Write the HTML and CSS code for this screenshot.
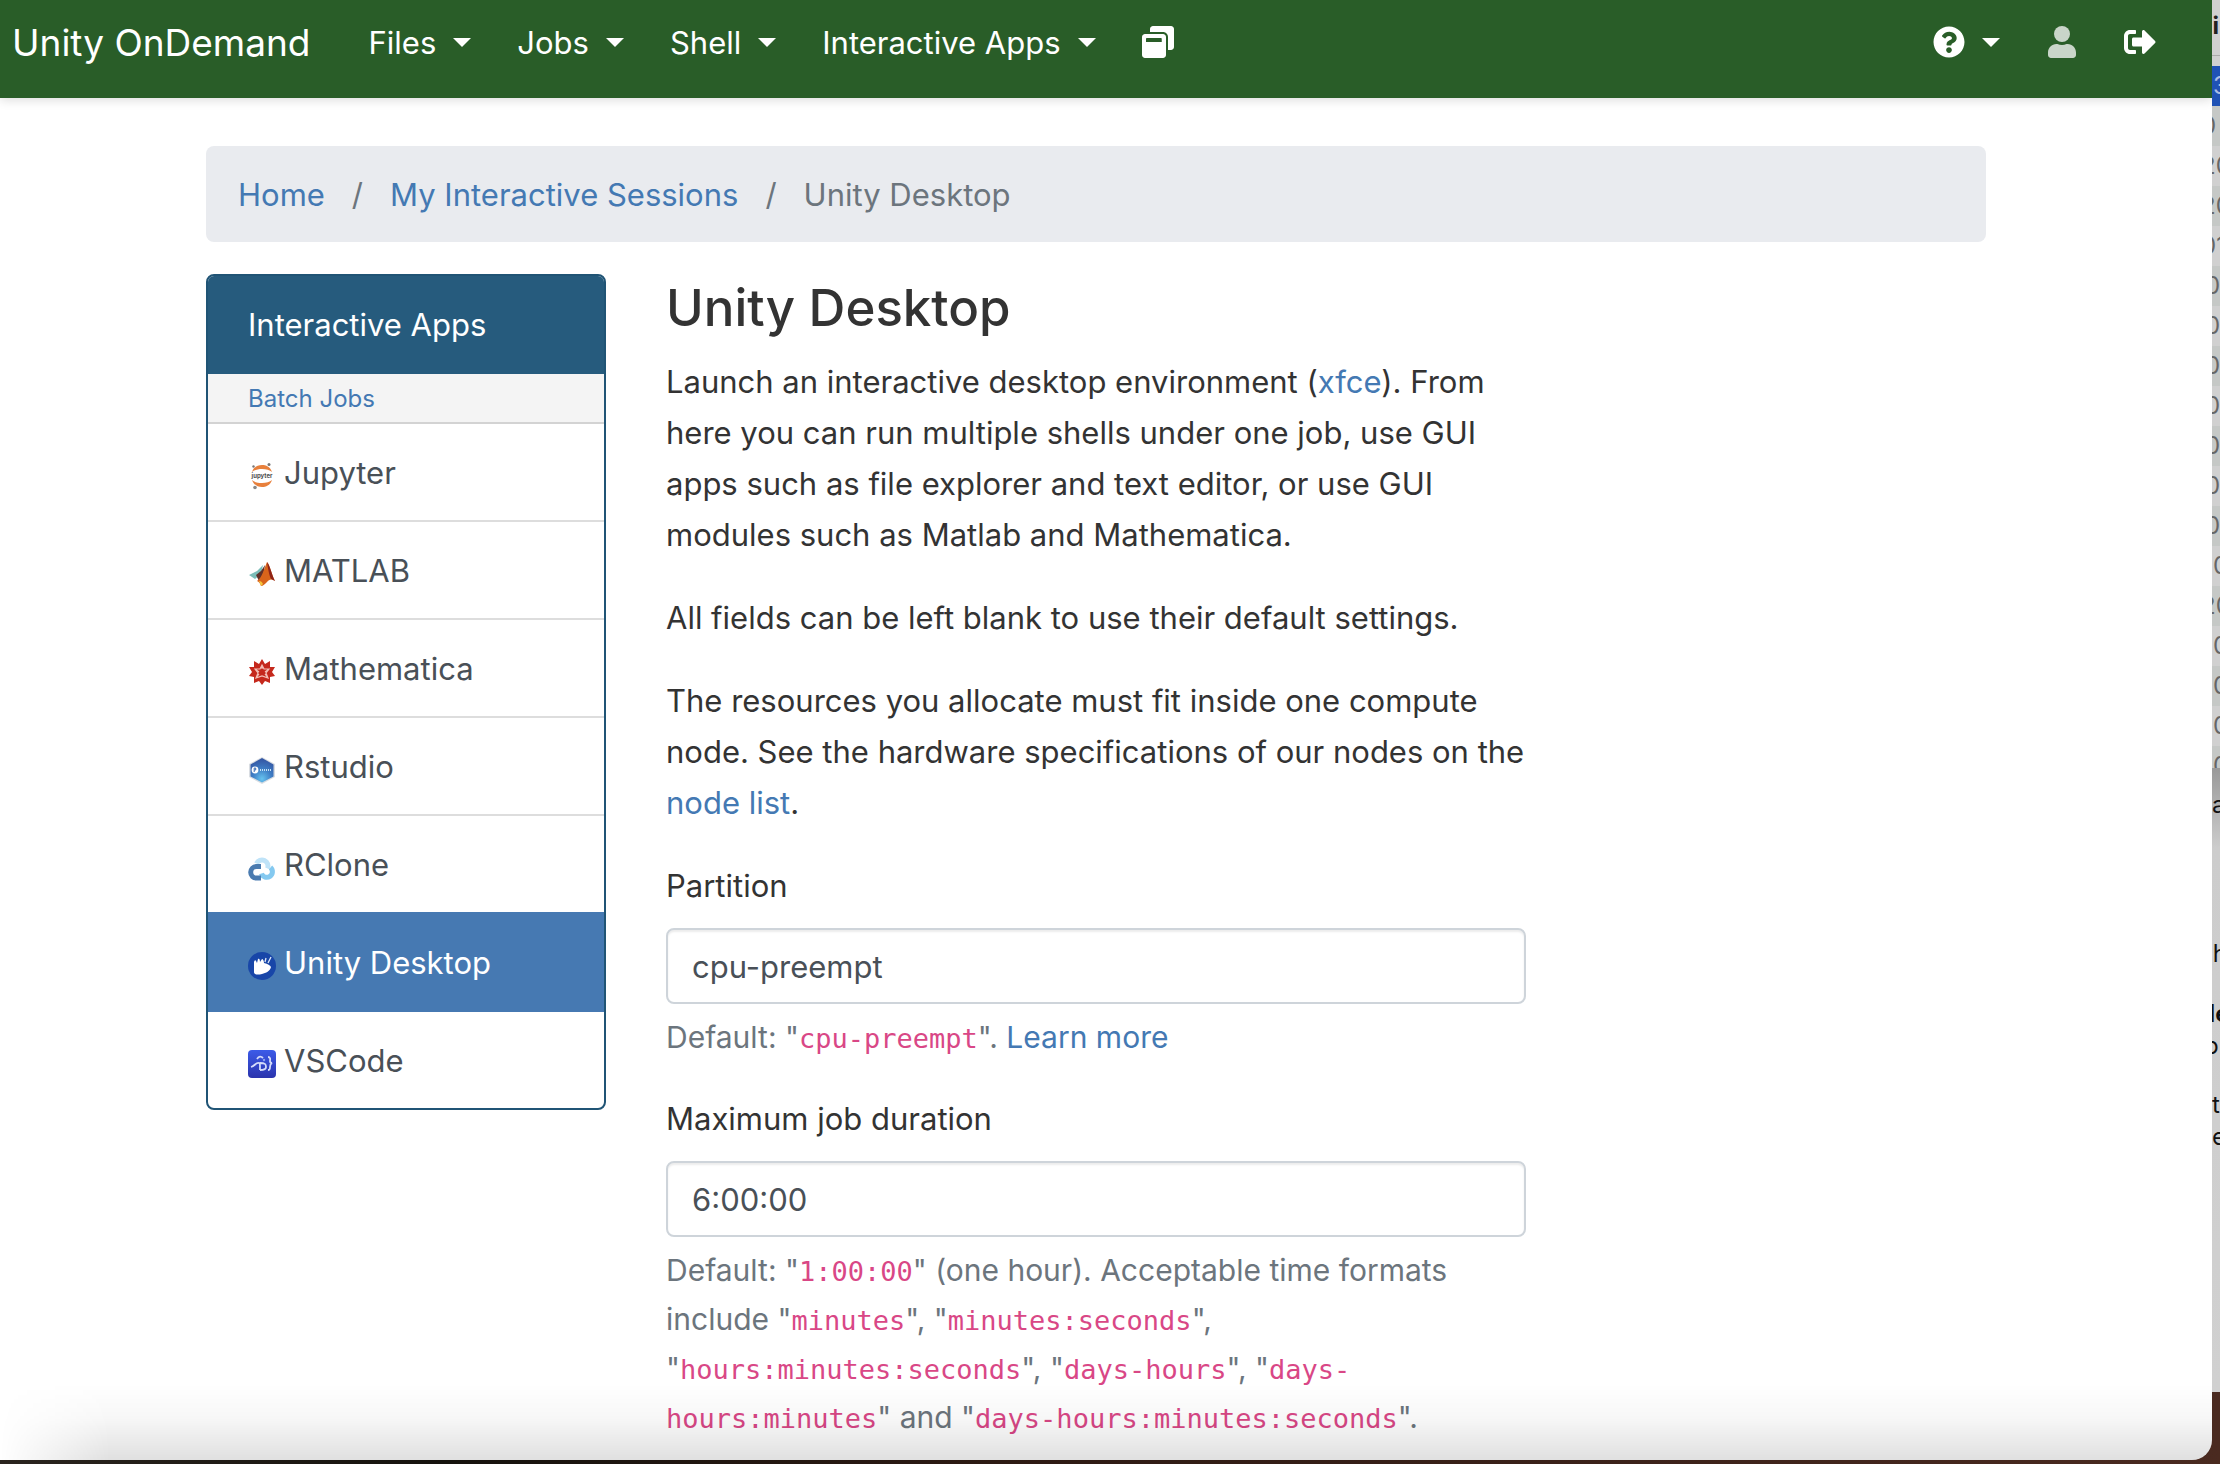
FILE: index.html
```
<!DOCTYPE html>
<html lang="en">
<head>
<meta charset="utf-8">
<meta name="viewport" content="width=device-width, initial-scale=1">
<title>Unity Desktop - Unity OnDemand</title>
<link rel="stylesheet" href="styles.css">
</head>
<body>
<div class="window">
  <header class="navbar">
    <a class="brand" href="#">Unity OnDemand</a>
    <nav class="nav nav-main" aria-label="Main">
      <button class="nav-item" type="button">Files <span class="caret"></span></button>
      <button class="nav-item" type="button">Jobs <span class="caret"></span></button>
      <button class="nav-item" type="button">Shell <span class="caret"></span></button>
      <button class="nav-item" type="button">Interactive Apps <span class="caret"></span></button>
      <a class="nav-item" href="#" aria-label="My Interactive Sessions">
        <svg class="nav-icon" viewBox="0 0 512 512" fill="currentColor"><path d="M512 48v288c0 26.500-21.500 48-48 48h-48V176c0-44.100-35.900-80-80-80H128V48c0-26.500 21.500-48 48-48h288c26.500 0 48 21.500 48 48zM384 176v288c0 26.500-21.500 48-48 48H48c-26.500 0-48-21.500-48-48V176c0-26.500 21.500-48 48-48h288c26.500 0 48 21.500 48 48zm-68 28c0-6.600-5.400-12-12-12H76c-6.600 0-12 5.400-12 12v52h252v-52z"/></svg>
      </a>
    </nav>
    <nav class="nav nav-user" aria-label="User">
      <button class="nav-item" type="button" aria-label="Help">
        <svg class="nav-icon" viewBox="0 0 512 512" fill="currentColor"><path d="M504 256c0 137-111 248-248 248S8 393 8 256C8 119 119 8 256 8s248 111 248 248zM262.700 90c-54.500 0-89.300 23-116.500 63.800-3.500 5.300-2.400 12.400 2.700 16.300l34.700 26.300c5.200 3.900 12.600 3 16.700-2.100 17.900-22.700 30.100-35.800 57.300-35.800 20.400 0 45.700 13.100 45.700 33 0 15-12.400 22.700-32.500 34C247.100 238.500 216 254.900 216 296v4c0 6.600 5.400 12 12 12h56c6.600 0 12-5.400 12-12v-1.300c0-28.500 83.200-29.600 83.200-106.700 0-58-60.200-102-116.500-102zM256 338c-25.400 0-46 20.600-46 46 0 25.400 20.600 46 46 46s46-20.600 46-46c0-25.400-20.600-46-46-46z"/></svg>
        <span class="caret"></span>
      </button>
      <a class="nav-item nav-muted" href="#" aria-label="Account">
        <svg class="nav-icon nav-icon-narrow" viewBox="0 0 448 512" fill="currentColor"><circle cx="224" cy="128" r="128"/><path d="M313.600 288h-16.700c-22.200 10.200-46.900 16-72.900 16s-50.600-5.800-72.900-16h-16.700C60.200 288 0 348.200 0 422.400V464c0 26.500 21.500 48 48 48h352c26.500 0 48-21.500 48-48v-41.600c0-74.200-60.200-134.400-134.400-134.400z"/></svg>
      </a>
      <a class="nav-item" href="#" aria-label="Log out">
        <svg class="nav-icon" viewBox="0 0 512 512" fill="currentColor"><path d="M497 273L329 441c-15 15-41 4.500-41-17v-96H152c-13.300 0-24-10.700-24-24v-96c0-13.300 10.700-24 24-24h136V88c0-21.400 25.900-32 41-17l168 168c9.300 9.400 9.300 24.600 0 34zM192 436v-40c0-6.600-5.400-12-12-12H96c-17.700 0-32-14.300-32-32V160c0-17.700 14.300-32 32-32h84c6.600 0 12-5.400 12-12V76c0-6.600-5.400-12-12-12H96c-53 0-96 43-96 96v192c0 53 43 96 96 96h84c6.600 0 12-5.400 12-12z"/></svg>
      </a>
    </nav>
  </header>

  <div class="container">
    <nav aria-label="Breadcrumb">
      <ol class="breadcrumb">
        <li><a href="#">Home</a></li>
        <li class="divider" aria-hidden="true">/</li>
        <li><a href="#">My Interactive Sessions</a></li>
        <li class="divider" aria-hidden="true">/</li>
        <li>Unity Desktop</li>
      </ol>
    </nav>

    <div class="columns">
      <aside class="apps">
        <h2 class="apps-title">Interactive Apps</h2>
        <p class="apps-group"><a href="#">Batch Jobs</a></p>
        <a class="app" href="#">
          <svg class="app-icon" viewBox="0 0 28 28"><path d="M4 10C6 4.500 10 3 14 3s8 1.500 10 7C20 6 8 6 4 10z" fill="#e8803c"/><path d="M4 18c2 5.500 6 7 10 7s8-1.500 10-7c-4 4-16 4-20 0z" fill="#e8803c"/><circle cx="5.500" cy="4.500" r="1.200" fill="#777"/><circle cx="21" cy="2.500" r="1.500" fill="#777"/><circle cx="7" cy="25.500" r="1.800" fill="#888"/><text x="14" y="16" text-anchor="middle" class="logo-text">jupyter</text></svg>
          Jupyter
        </a>
        <a class="app" href="#">
          <svg class="app-icon" viewBox="0 0 28 28"><path d="M1 15l8-4 6-6-2 9-6 5z" fill="#7bbdb8"/><path d="M8 15l5-4 4-6-2 12-4 4z" fill="#60302a"/><path d="M19 2c3 3 5 14 8 19-4-3-6-1-8 1s-4 4-6 4c-1-3-2-4-4-5 5-3 7-12 10-19z" fill="#d9641b"/><path d="M19 2c3 3 5 14 8 19l-4-2c-2-4-3-11-4-17z" fill="#8f2418"/><path d="M11 21c2 0 3 1 4 3l-2 2z" fill="#f5c73b"/></svg>
          MATLAB
        </a>
        <a class="app" href="#">
          <svg class="app-icon" viewBox="0 0 28 28"><path d="M14 1l3 5 5-3v6l5 0-3 5 3 4-5 1 0 6-5-2-3 4-3-4-5 2 0-6-5-1 3-4-3-5 5 0V3l5 3z" fill="#c5281c"/><path d="M14 7l2 4 5 0-3 4 2 5-6-2-6 2 2-5-3-4 5 0zM14 7v4M21 11l-4 3M20 20l-3-4M8 20l3-4M7 11l4 3" fill="none" stroke="#f3bdb5" stroke-width="1.200"/></svg>
          Mathematica
        </a>
        <a class="app" href="#">
          <svg class="app-icon" viewBox="0 0 28 28"><defs><radialGradient id="hex" cx=".5" cy=".85" r=".8"><stop offset="0" stop-color="#66c3ef"/><stop offset=".5" stop-color="#3f7fc6"/><stop offset="1" stop-color="#3457a4"/></radialGradient></defs><path d="M14 1l13 7v13l-13 7-13-7V8z" fill="#d9dde2"/><path d="M14 2l11.500 6.500v12L14 26.500l-11.500-6V8.500z" fill="url(#hex)"/><circle cx="7" cy="14" r="3.400" fill="#fff"/><path d="M6.200 16v-4h1.500v2H6.200" stroke="#3f6fb5" fill="none"/><path d="M12 14h12" stroke="#c7e2f5" stroke-width="2" stroke-dasharray="1 1"/></svg>
          Rstudio
        </a>
        <a class="app" href="#">
          <svg class="app-icon" viewBox="0 0 28 28" fill="none" stroke-width="5"><path d="M8.500 9.500a6 6 0 1 1 11 5" stroke="#bfe3f8"/><path d="M22.500 13.500a5.600 5.600 0 1 1-9 6" stroke="#84c9f0"/><path d="M13 12.500H8.500a5.800 5.800 0 0 0 0 11.600H13" stroke="#4a7bb0"/></svg>
          RClone
        </a>
        <a class="app app-active" href="#" aria-current="page">
          <svg class="app-icon" viewBox="0 0 28 28"><circle cx="14" cy="14" r="14" fill="#1846a8"/><path d="M6 10c1-3 2-2 3 1l1-4c1-1 2 0 2 3l2-3c1 0 2 2 2 4 4 1 6 2 7 4-1 4-5 6-9 7-4 1-8 1-8-2z" fill="#fff"/><path d="M17 10l1-4M20 11l3-6" stroke="#dfe8f8" stroke-width="1.300"/></svg>
          Unity Desktop
        </a>
        <a class="app" href="#">
          <svg class="app-icon" viewBox="0 0 28 28"><defs><linearGradient id="code" x2="0" y2="1"><stop offset="0" stop-color="#3c5be8"/><stop offset="1" stop-color="#2b34ad"/></linearGradient></defs><rect width="28" height="28" rx="4" fill="url(#code)"/><path d="M3 17c4-1 5-5 8-4 1 0 1 2 1 7M9 9c2-3 4-3 6-1M12 13c5 0 6 1 6 4s-3 3-6 3M20 7c3 0 2 3 2 4s0 2 2 2c-2 1-2 2-2 4s0 3-2 3" fill="none" stroke="#d5dcfa" stroke-width="1.800"/><circle cx="16" cy="10" r="1.200" fill="#8fa2f2"/></svg>
          VSCode
        </a>
      </aside>

      <main class="content">
        <h1 class="title">Unity Desktop</h1>
        <p>Launch an interactive desktop environment (<a href="#">xfce</a>). From here you can run multiple shells under one job, use GUI apps such as file explorer and text editor, or use GUI modules such as Matlab and Mathematica.</p>
        <p>All fields can be left blank to use their default settings.</p>
        <p>The resources you allocate must fit inside one compute node. See the hardware specifications of our nodes on the <a href="#">node list</a>.</p>
        <form>
          <div class="field">
            <label for="partition">Partition</label>
            <input id="partition" type="text" value="cpu-preempt" aria-describedby="partition-help">
            <p class="help" id="partition-help">Default: "<code>cpu-preempt</code>". <a href="#">Learn more</a></p>
          </div>
          <div class="field">
            <label for="duration">Maximum job duration</label>
            <input id="duration" type="text" value="6:00:00" aria-describedby="duration-help">
            <p class="help" id="duration-help">Default: "<code>1:00:00</code>" (one hour). Acceptable time formats include "<code>minutes</code>", "<code>minutes:seconds</code>", "<code>hours:minutes:seconds</code>", "<code>days-hours</code>", "<code>days-hours:minutes</code>" and "<code>days-hours:minutes:seconds</code>".</p>
          </div>
        </form>
      </main>
    </div>
  </div>
</div>

<div class="behind" aria-hidden="true">
  <div class="list-window">
    <div class="list-head">li</div>
    <div class="row row-selected">3</div>
    <div class="row cut">0</div>
    <div class="row cut">20</div>
    <div class="row cut">20</div>
    <div class="row cut">01</div>
    <div class="row half">0</div>
    <div class="row half">0</div>
    <div class="row half">0</div>
    <div class="row half">0</div>
    <div class="row half">0</div>
    <div class="row half">0</div>
    <div class="row half">0</div>
    <div class="row">0</div>
    <div class="row cut">20</div>
    <div class="row">0</div>
    <div class="row">0</div>
    <div class="row">0</div>
    <div class="row">0</div>
  </div>
  <div class="doc-window">
    <p>a</p>
    <p class="gap-l half">(h</p>
    <p class="gap-m cut strong">de</p>
    <p class="half">p</p>
    <p class="gap-s">t</p>
    <p>e</p>
  </div>
</div>
</body>
</html>
```
FILE: styles.css
```
:root {
  --green: #295d28;
  --link: #4479b3;
  --header: #265b7d;
  --outline: #205475;
  --text: #333;
  --muted: #6c757d;
  --line: #ddd;
}

* { box-sizing: border-box; }

body {
  margin: 0;
  min-height: 100vh;
  display: grid;
  grid-template-columns: 1fr 8px;
  grid-template-rows: 1fr;
  background: linear-gradient(90deg, #2a241e, #15120d 20%, #2d1a13 45%, #3a2119 70%, #4a2a20);
  color: var(--text);
  font: 31px/51px Inter, "Liberation Sans", sans-serif;
}

a { color: var(--link); text-decoration: none; }
p { margin: 0 0 32px; }

.window {
  position: relative;
  margin-bottom: 4px;
  background: #fff;
  border-radius: 0 0 20px 0;
  overflow: hidden;
}

/* soft shade along the bottom edge of the window */
.window::after {
  content: "";
  position: absolute;
  inset: auto 0 0 0;
  height: 76px;
  background: linear-gradient(transparent, rgba(0, 0, 0, .03) 45%, rgba(0, 0, 0, .12));
  mask-image: linear-gradient(90deg, transparent, #000 110px);
  pointer-events: none;
}

/* navigation bar */
.navbar {
  display: flex;
  align-items: center;
  height: 98px;
  padding: 0 56px 14px 12px;
  background: var(--green);
  box-shadow: 0 2px 10px rgba(0, 0, 0, .14);
}
.brand {
  margin-right: 58px;
  color: #fff;
  font-size: 37px;
}
.nav { display: flex; align-items: center; gap: 48px; }
.nav-main { gap: 46px; }
.nav-user { margin-left: auto; }
.nav-item {
  display: flex;
  align-items: center;
  gap: 17px;
  padding: 0;
  border: 0;
  background: none;
  color: #fff;
  font: inherit;
}
.nav-muted { color: #c9d5c9; }
.nav-icon { width: 32px; height: 32px; }
.nav-icon-narrow { width: 28px; }
.caret {
  border: 9px solid transparent;
  border-top-color: #fff;
  border-bottom: 0;
}

/* page body */
.container {
  max-width: 1780px;
  margin: 48px 226px 8px 206px;
}
.breadcrumb {
  display: flex;
  gap: 27px;
  margin: 0 0 32px;
  padding: 23px 32px 22px;
  border-radius: 8px;
  background: #e9ebef;
  color: var(--muted);
  list-style: none;
}
.columns {
  display: grid;
  grid-template-columns: 400px minmax(0, 860px);
  gap: 60px;
  align-items: start;
}

/* app list */
.apps {
  border: 2px solid var(--outline);
  border-radius: 8px;
  overflow: hidden;
}
.apps-title {
  margin: 0;
  padding: 23px 40px 24px;
  background: var(--header);
  color: #fff;
  font-size: 31px;
  font-weight: 400;
}
.apps-group {
  margin: 0;
  padding: 2px 40px 0;
  border-bottom: 2px solid #d3d3d3;
  background: #f4f4f4;
  font-size: 24px;
  line-height: 46px;
}
.app {
  display: flex;
  align-items: center;
  gap: 8px;
  padding: 23px 40px 22px;
  border-bottom: 2px solid var(--line);
  color: #495057;
}
.app:last-child { border-bottom: 0; }
.app:has(+ .app-active) { border-bottom-color: #4679b2; }
.app-active {
  border-color: #4679b2;
  background: #4679b2;
  color: #fff;
}
.app-icon { width: 28px; height: 28px; margin-top: 6px; }
.logo-text { font: 700 6px Inter, sans-serif; fill: #4e4e4e; }

/* form */
.title {
  margin: 0 0 14px;
  font-size: 51px;
  font-weight: 500;
  line-height: 68px;
}
.field { display: grid; }
.field label { margin-bottom: 17px; }
.field input {
  width: 100%;
  height: 76px;
  padding: 0 24px;
  border: 2px solid #ced4da;
  border-radius: 8px;
  background: #fff;
  box-shadow: inset 0 2px 2px rgba(0, 0, 0, .08);
  color: #495057;
  font: inherit;
}
.help {
  margin: 9px 0 31px;
  color: var(--muted);
  font-size: 30px;
  line-height: 49px;
}
.help code {
  color: #d94786;
  font: 27px "DejaVu Sans Mono", monospace;
}
.field:last-child .help { margin-bottom: 0; }

/* sliver of other windows beside this one */
.behind {
  height: 100%;
  overflow: hidden;
  white-space: nowrap;
  font-size: 24px;
}
.list-window { height: 768px; overflow: hidden; background: #d0d0d0; color: #666; }
.list-head {
  height: 56px;
  margin-bottom: 10px;
  border-bottom: 1px solid #aaa;
  color: #222;
  font-weight: 700;
  text-indent: -6px;
}
.row { height: 40px; line-height: 40px; padding-left: 1px; background: #d0d0d0; }
.row:nth-child(odd) { background: #c5c8c6; }
.row.row-selected { background: #1f52b5; color: #a9bde4; }
.cut { text-indent: -12px; }
.half { text-indent: -8px; }
.doc-window {
  height: 624px;
  padding-top: 21px;
  background: linear-gradient(#999, #ccc 80px, #d0d0d0);
  color: #111;
}
.doc-window p { margin: 0; line-height: 32px; }
.doc-window .gap-l { margin-top: 117px; }
.doc-window .gap-m { margin-top: 28px; }
.doc-window .gap-s { margin-top: 27px; }
.strong { font-weight: 700; }
```
